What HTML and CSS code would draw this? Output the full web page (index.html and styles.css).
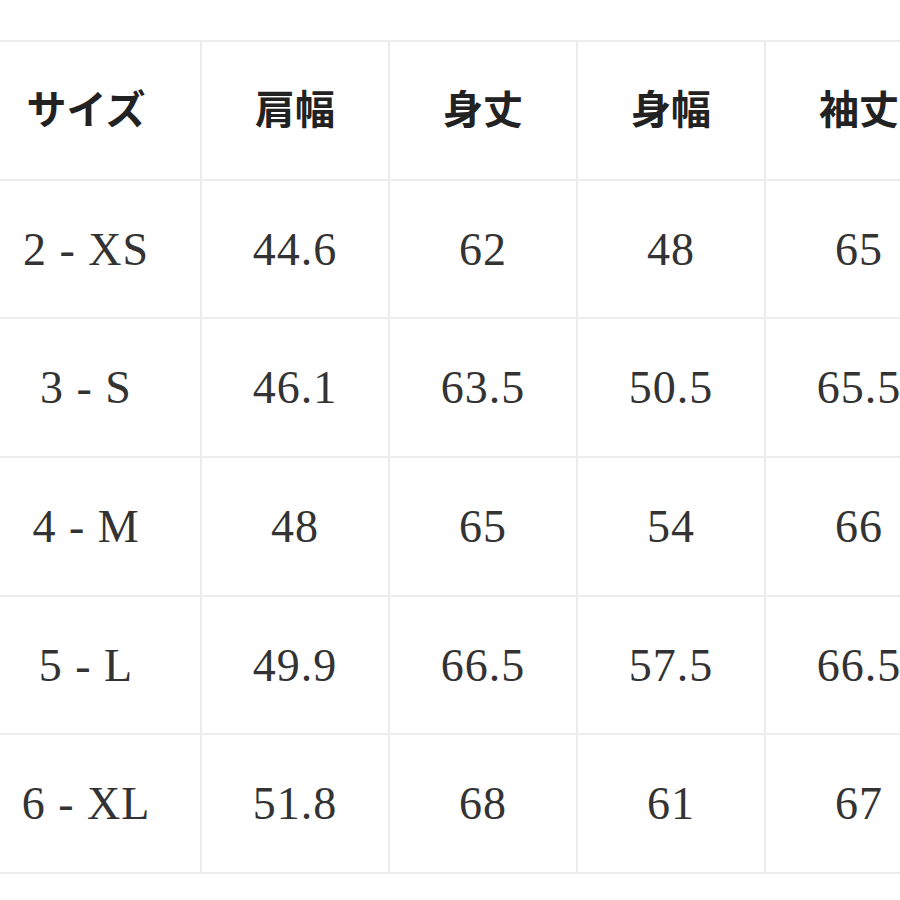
FILE: index.html
```html
<!DOCTYPE html>
<html lang="ja">
<head>
<meta charset="utf-8">
<link rel="stylesheet" href="styles.css">
</head>
<body>
<table class="size-table">
  <colgroup>
    <col class="c-first"><col class="c"><col class="c"><col class="c"><col class="c">
  </colgroup>
  <thead>
    <tr><th>サイズ</th><th>肩幅</th><th>身丈</th><th>身幅</th><th>袖丈</th></tr>
  </thead>
  <tbody>
    <tr><td>2 - XS</td><td>44.6</td><td>62</td><td>48</td><td>65</td></tr>
    <tr><td>3 - S</td><td>46.1</td><td>63.5</td><td>50.5</td><td>65.5</td></tr>
    <tr><td>4 - M</td><td>48</td><td>65</td><td>54</td><td>66</td></tr>
    <tr><td>5 - L</td><td>49.9</td><td>66.5</td><td>57.5</td><td>66.5</td></tr>
    <tr><td>6 - XL</td><td>51.8</td><td>68</td><td>61</td><td>67</td></tr>
  </tbody>
</table>
</body>
</html>
```
FILE: styles.css
```css
html, body {
  margin: 0;
  padding: 0;
  background: #ffffff;
  overflow: hidden;
}
.size-table {
  border-collapse: collapse;
  table-layout: fixed;
  width: 982px;
  margin-top: 40px;
  margin-left: -30px;
  color: #2b2b2b;
}
.c-first { width: 230px; }
.c { width: 188px; }
.size-table th,
.size-table td {
  border: 2px solid #ececec;
  height: 136.7px;
  padding: 0;
  text-align: center;
  vertical-align: middle;
  white-space: nowrap;
  overflow: visible;
}
.size-table th {
  font-family: "Noto Sans CJK JP", sans-serif;
  font-weight: 700;
  font-size: 40px;
  height: 130.7px;
  padding-bottom: 6px;
  color: #222222;
}
.size-table td {
  font-family: "Liberation Serif", "Noto Sans CJK JP", serif;
  font-weight: 400;
  font-size: 46px;
  letter-spacing: 1px;
  color: #333333;
}
```
